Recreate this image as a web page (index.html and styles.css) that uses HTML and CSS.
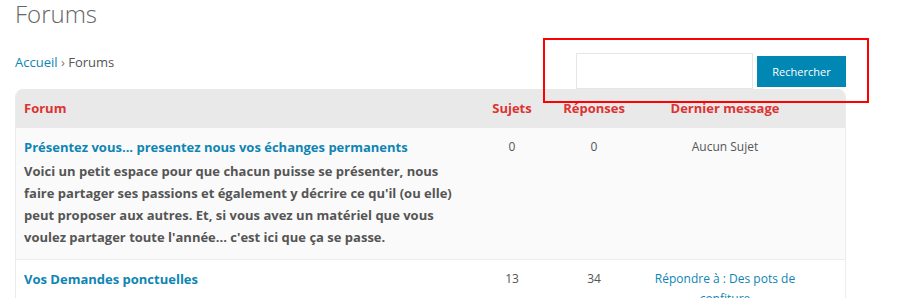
FILE: index.html
```html
<!DOCTYPE html>
<html lang="fr">
<head>
  <meta charset="UTF-8">
  <meta name="viewport" content="width=device-width, initial-scale=1.0">
  <title>Forums</title>
  <link rel="stylesheet" href="styles.css">
</head>
<body>

  <div class="page">
    <h1 class="page-title">Forums</h1>

    <!-- Fil d'ariane + recherche -->
    <div class="forum-bar">
      <div class="breadcrumb">
        <a href="#">Accueil</a> <span class="sep">›</span> Forums
      </div>
      <form class="search-form" action="#">
        <input class="search-input" type="text">
        <button class="search-btn" type="button">Rechercher</button>
      </form>
    </div>

    <!-- Liste des forums -->
    <div class="forums">
      <div class="forums-head row">
        <div class="col-info">Forum</div>
        <div class="col-count">Sujets</div>
        <div class="col-count">Réponses</div>
        <div class="col-fresh">Dernier message</div>
      </div>

      <div class="forum-row row odd">
        <div class="col-info">
          <a class="forum-title" href="#">Présentez vous... presentez nous vos échanges permanents</a>
          <p class="forum-desc">Voici un petit espace pour que chacun puisse se présenter, nous faire partager ses passions et également y décrire ce qu'il (ou elle) peut proposer aux autres. Et, si vous avez un matériel que vous voulez partager toute l'année... c'est ici que ça se passe.</p>
        </div>
        <div class="col-count">0</div>
        <div class="col-count">0</div>
        <div class="col-fresh">Aucun Sujet</div>
      </div>

      <div class="forum-row row">
        <div class="col-info">
          <a class="forum-title" href="#">Vos Demandes ponctuelles</a>
        </div>
        <div class="col-count">13</div>
        <div class="col-count">34</div>
        <div class="col-fresh"><a href="#">Répondre à : Des pots de confiture</a></div>
      </div>
    </div>
  </div>

  <!-- Cadre rouge d'annotation -->
  <div class="highlight"></div>

</body>
</html>
```

FILE: styles.css
```css
* { margin: 0; padding: 0; box-sizing: border-box; }
body {
  background: #fff;
  font-family: 'Open Sans', sans-serif;
  font-size: 13px;
  color: #555;
  position: relative;
  overflow: hidden;
}
a { color: #0e85b3; text-decoration: none; }
.page {
  width: 831px;
  margin-left: 15px;
}
.page-title {
  font-size: 24px;
  font-weight: 300;
  line-height: 27px;
  color: #666;
  margin-bottom: 25px;
}
/* Barre : fil d'ariane + recherche */
.forum-bar {
  display: flex;
  justify-content: space-between;
  align-items: flex-start;
  height: 37px;
}
.breadcrumb {
  line-height: 20px;
}
.breadcrumb .sep { color: #777; }
.search-form {
  display: flex;
  align-items: flex-start;
  gap: 4px;
  padding-top: 1px;
}
.search-input {
  width: 177px;
  height: 36px;
  border: 1px solid #e6e6e6;
  background: #fff;
  outline: none;
}
.search-btn {
  margin-top: 3px;
  width: 89px;
  height: 31px;
  border: none;
  background: #0087b3;
  color: #fff;
  font-family: 'Open Sans', sans-serif;
  font-size: 11px;
  cursor: pointer;
}
/* Tableau des forums */
.forums {
  border: 1px solid #ececec;
  border-top: none;
  border-radius: 8px 8px 0 0;
  overflow: hidden;
}
.row {
  display: grid;
  grid-template-columns: 451px 82px 82px 180px;
  padding-left: 4px;
}
.col-info { padding-left: 4px; }
.col-count, .col-fresh { text-align: center; }
.forums-head {
  background: #e9e9e9;
  color: #dd3333;
  font-weight: bold;
  line-height: 19px;
  padding-top: 10px;
  padding-bottom: 10px;
}
.forum-row {
  line-height: 22px;
  padding-top: 8px;
  padding-bottom: 11px;
  border-top: 1px solid #ececec;
}
.forum-row:nth-child(2) { border-top: none; }
.forum-row .col-count, .forum-row .col-fresh { font-size: 12px; }
.odd { background: #fafafa; }
.forum-title {
  font-weight: bold;
  display: block;
}
.forum-desc {
  font-weight: bold;
  margin-top: 2px;
  padding-right: 4px;
}
.forum-row .col-fresh { line-height: 20px; padding: 1px 14px 0; }
/* Annotation */
.highlight {
  position: absolute;
  left: 543px;
  top: 38px;
  width: 326px;
  height: 65px;
  border: 2px solid #f00;
}
```
